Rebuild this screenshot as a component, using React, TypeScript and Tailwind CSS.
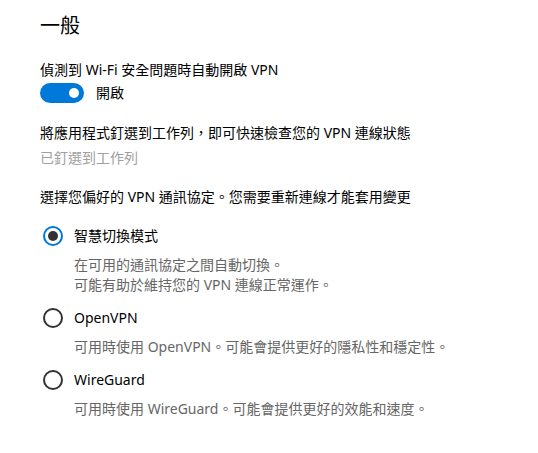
const font = "font-['Noto_Sans','Noto_Sans_CJK_TC',sans-serif]";

interface RadioOptionProps {
  label: string;
  checked?: boolean;
  lines: string[];
  first?: boolean;
}

function RadioOption({ label, checked, lines, first }: RadioOptionProps) {
  return (
    <div className={first ? "mt-[19px]" : "mt-[13px]"}>
      <div className="flex items-center h-5 ml-[3px]">
        {checked ? (
          <span className="w-5 h-5 rounded-full border-2 border-[#0078d7] flex items-center justify-center">
            <span className="w-[10px] h-[10px] rounded-full bg-[#333]"></span>
          </span>
        ) : (
          <span className="w-5 h-5 rounded-full border-2 border-[#333]"></span>
        )}
        <span className="ml-[11px] text-[14px] leading-5 text-black">{label}</span>
      </div>
      <div className="mt-[9px] pl-[34px] text-[14px] leading-5 text-[#666]">
        {lines.map((l) => (
          <p key={l}>{l}</p>
        ))}
      </div>
    </div>
  );
}

export default function App() {
  return (
    <div className={`w-[538px] h-[453px] bg-white pl-10 pt-3 ${font}`}>
      <h2 className="text-[20px] leading-7 text-black">一般</h2>

      <p className="mt-5 text-[14px] leading-5 text-black">偵測到 Wi-Fi 安全問題時自動開啟 VPN</p>
      <div className="mt-[3px] flex items-center h-5">
        <span className="w-11 h-5 rounded-full bg-[#0078d7] flex items-center justify-end pr-[5px]">
          <span className="w-[10px] h-[10px] rounded-full bg-white"></span>
        </span>
        <span className="ml-3 text-[14px] leading-5 text-black">開啟</span>
      </div>

      <p className="mt-5 text-[14px] leading-5 text-black">將應用程式釘選到工作列，即可快速檢查您的 VPN 連線狀態</p>
      <p className="mt-[5px] text-[14px] leading-5 text-[#a0a0a0]">已釘選到工作列</p>

      <p className="mt-[19px] text-[14px] leading-5 text-black">選擇您偏好的 VPN 通訊協定。您需要重新連線才能套用變更</p>

      <RadioOption
        first
        checked
        label="智慧切換模式"
        lines={["在可用的通訊協定之間自動切換。", "可能有助於維持您的 VPN 連線正常運作。"]}
      />
      <RadioOption label="OpenVPN" lines={["可用時使用 OpenVPN。可能會提供更好的隱私性和穩定性。"]} />
      <RadioOption label="WireGuard" lines={["可用時使用 WireGuard。可能會提供更好的效能和速度。"]} />
    </div>
  );
}
